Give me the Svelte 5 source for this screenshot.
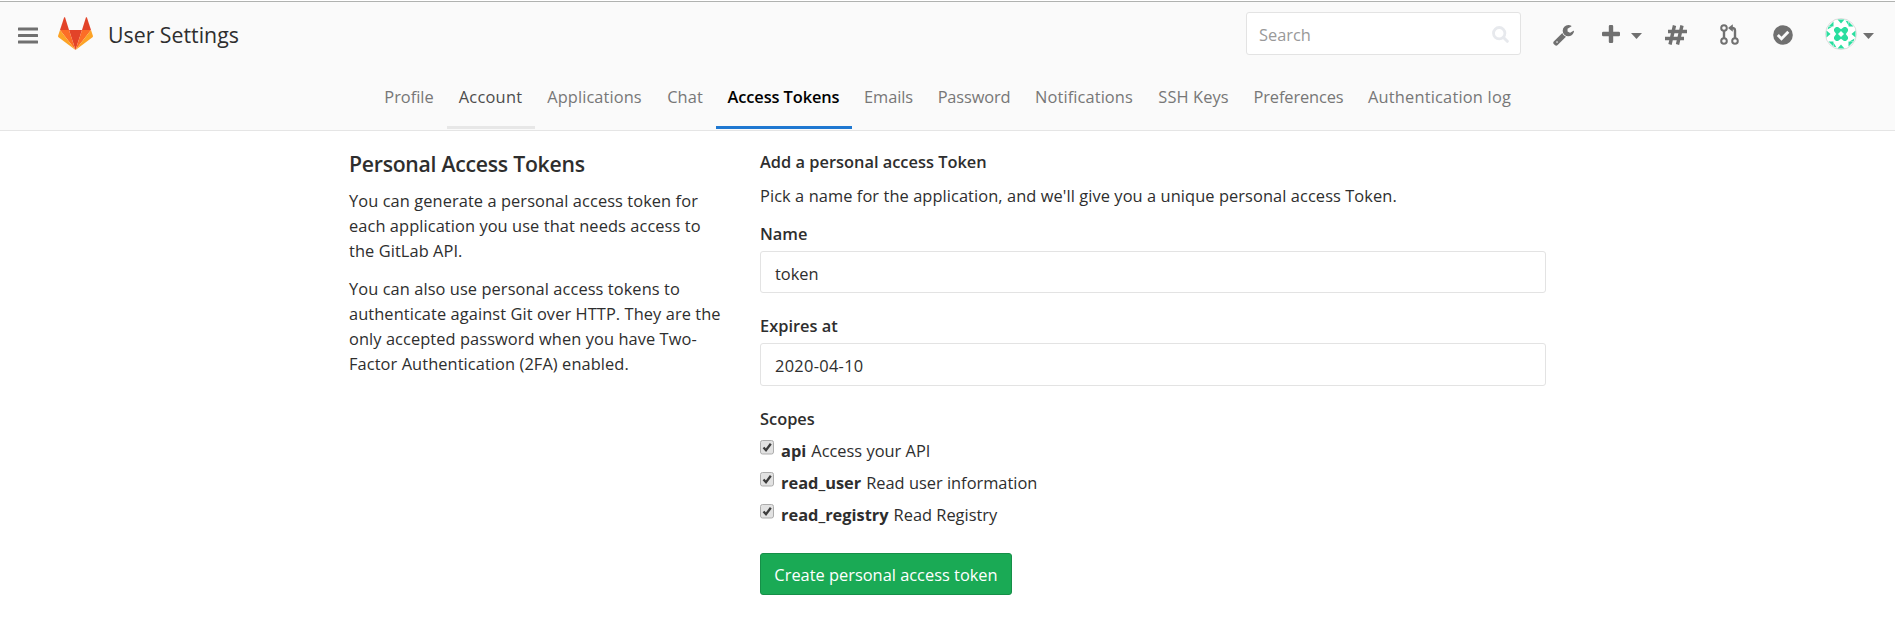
<script>
  const tabs = [
    { label: 'Profile', width: 75, spacing: 0 },
    { label: 'Account', width: 88, spacing: 0.25, state: 'hover' },
    { label: 'Applications', width: 120, spacing: 0.1 },
    { label: 'Chat', width: 61, spacing: 0.1 },
    { label: 'Access Tokens', width: 136, spacing: -0.1, state: 'active' },
    { label: 'Emails', width: 74, spacing: -0.1 },
    { label: 'Password', width: 97, spacing: -0.15 },
    { label: 'Notifications', width: 123, spacing: 0.1 },
    { label: 'SSH Keys', width: 96, spacing: 0.1 },
    { label: 'Preferences', width: 114, spacing: -0.12 },
    { label: 'Authentication log', width: 168, spacing: 0.2 }
  ];
  const scopes = [
    { name: 'api', text: 'Access your API' },
    { name: 'read_user', text: 'Read user information' },
    { name: 'read_registry', text: 'Read Registry' }
  ];
  const quarterTurns = [0, 90, 180, 270];
</script>

<header>
  <div class="bar">
    <svg class="burger" width="20" height="17" viewBox="0 0 20 17" fill="#707070">
      <rect y="0.5" width="20" height="3" rx=".5" /><rect y="7" width="20" height="3" rx=".5" /><rect y="13.5" width="20" height="3" rx=".5" />
    </svg>
    <svg class="logo" width="35" height="33" viewBox="0 0 35 33">
      <path fill="#e24329" d="M17.5 33 24 13H11z" />
      <path fill="#fc6d26" d="M17.5 33 11 13H2z" />
      <path fill="#fca326" d="M2 13 .1 18.8c-.2.6 0 1.200.4 1.500L17.500 33z" />
      <path fill="#e24329" d="M2 13h9L7.200.8c-.2-.6-1-.6-1.200 0z" />
      <path fill="#fc6d26" d="M17.500 33 24 13h9z" />
      <path fill="#fca326" d="m33 13 1.900 5.800c.2.6 0 1.200-.4 1.500L17.500 33z" />
      <path fill="#e24329" d="M33 13h-9L27.800.8c.2-.6 1-.6 1.200 0z" />
    </svg>
    <h1>User Settings</h1>
    <div class="search">
      <span>Search</span>
      <svg width="17" height="17" viewBox="0 0 17 17" fill="none" stroke="#e7e9ed">
        <circle cx="7.200" cy="7.200" r="5.700" stroke-width="2.800" /><path d="m11.500 11.500 3.800 3.800" stroke-width="3" stroke-linecap="round" />
      </svg>
    </div>
    <svg class="wrench" width="21" height="21" viewBox="0 0 1664 1664"><path fill="#707070" d="M384 1344q0-26-19-45t-45-19-45 19-19 45 19 45 45 19 45-19 19-45zm644-420-682 682q-37 37-90 37-52 0-91-37L59 1498q-38-36-38-90 0-53 38-91l681-681q39 98 114.500 173.500T1028 924zm634-435q0 39-23 106-47 134-164.500 217.500T1216 896q-185 0-316.500-131.500T768 448t131.500-316.500T1216 0q58 0 121.500 16.500T1445 63q16 11 16 28t-16 28l-293 169v224l193 107q5-3 79-48.500t135.500-81T1630 454q15 0 23.500 10t8.500 25z" /></svg>
    <svg class="plus" width="18" height="18" viewBox="0 0 18 18"><path fill="#707070" d="M8 0h2q1.200 0 1.200 1.200v5.600h5.600q1.200 0 1.200 1.200v2q0 1.200-1.200 1.200h-5.600v5.600q0 1.200-1.200 1.200H8q-1.200 0-1.200-1.200v-5.600H1.200Q0 11.200 0 10V8q0-1.200 1.200-1.200h5.600V1.200Q6.800 0 8 0z" /></svg>
    <svg class="caret" width="11" height="6" viewBox="0 0 11 6"><path fill="#707070" d="M0 0h11L5.500 6z" /></svg>
    <svg class="hash" width="22" height="20" viewBox="0 0 22 20" fill="none" stroke="#707070" stroke-width="3.400"><path d="M9.500.5 5 19.500M17 .5l-4.500 19M3 6.500h19M0 13.500h19" /></svg>
    <svg class="merge" width="19" height="21" viewBox="0 0 19 21" fill="none" stroke="#707070">
      <g stroke-width="2"><circle cx="4" cy="4" r="2.800" /><circle cx="4" cy="17" r="2.800" /><circle cx="15" cy="17" r="2.800" /></g>
      <path stroke-width="2.400" d="M4 7v7M15 14V6.500Q15 4 12 4h-1" /><path fill="#707070" stroke="none" d="M12.800.3v7.400L8 4z" />
    </svg>
    <svg class="check" width="20" height="20" viewBox="0 0 20 20"><circle cx="10" cy="10" r="9.800" fill="#707070" /><path d="m4.800 10 3.700 3.700 6.800-6.900" fill="none" stroke="#fafafa" stroke-width="2.900" /></svg>
    <svg class="avatar" width="32" height="32" viewBox="0 0 32 32">
      <circle cx="16" cy="16" r="15.500" fill="#fff" stroke="#dcdcdc" />
      <g fill="#2ade9f">
        {#each quarterTurns as angle}
          <g transform="rotate({angle} 16 16)">
            <path d="M11 9h2L16 11.200v1.800L13 16h-1.800L9 13v-2z" />
            <path d="M12.500 1.500 19.500 1.500 16 5.500z" />
            <path d="M8.500 3.500v5L4 8zM3.500 8.500 7.500 8.500 2.500 11.500z" />
          </g>
        {/each}
      </g>
    </svg>
    <svg class="caret last" width="11" height="6" viewBox="0 0 11 6"><path fill="#707070" d="M0 0h11L5.500 6z" /></svg>
  </div>
  <nav>
    {#each tabs as tab}
      <a class={tab.state} style:width="{tab.width}px" style:letter-spacing="{tab.spacing}px">{tab.label}</a>
    {/each}
  </nav>
</header>

<main>
  <aside>
    <h2>Personal Access Tokens</h2>
    <p>You can generate a personal access token for<br />each application you use that needs access to<br />the GitLab API.</p>
    <p>You can also use personal access tokens to<br />authenticate against Git over HTTP. They are the<br />only accepted password when you have Two-<br />Factor Authentication (2FA) enabled.</p>
  </aside>
  <section>
    <h3>Add a personal access Token</h3>
    <p class="intro">Pick a name for the application, and we'll give you a unique personal access Token.</p>
    <h3 class="label">Name</h3>
    <div class="input">token</div>
    <h3 class="label expires">Expires at</h3>
    <div class="input date">2020-04-10</div>
    <h3 class="label scopes">Scopes</h3>
    {#each scopes as scope}
      <div class="scope">
        <svg width="14" height="15" viewBox="0 0 14 15">
          <rect x=".5" y=".5" width="13" height="13.500" rx="2" fill="#e2e2e2" stroke="#adadad" />
          <path d="m3.500 7.500 2.500 2.700 4.800-6.400" fill="none" stroke="#3c3c3c" stroke-width="2.300" />
        </svg>
        <b>{scope.name}</b><span>{scope.text}</span>
      </div>
    {/each}
    <button>Create personal access token</button>
  </section>
</main>

<style>
  :global(body) {
    background: #fff;
    color: #2e2e2e;
    font: 400 16.4px/25px "Open Sans", sans-serif;
  }
  header {
    box-sizing: border-box;
    height: 131px;
    padding-top: 1px;
    background: #fafafa;
    border-bottom: 1px solid #e5e5e5;
    box-shadow: inset 0 1px #fff, inset 0 2px #b0b2b0;
  }
  .bar {
    display: flex;
    align-items: center;
    height: 69px;
  }
  svg { display: block; flex: none; }
  .burger { margin-left: 18px; }
  .logo { margin: -4px 0 0 20px; }
  h1 {
    margin: -2px auto 0 15px;
    font-size: 21.3px;
    font-weight: 400;
  }
  .search {
    box-sizing: border-box;
    display: flex;
    align-items: center;
    justify-content: space-between;
    width: 275px;
    height: 43px;
    margin-top: -4px;
    padding: 2px 11px 0 12px;
    border: 1px solid #e3e3e3;
    border-radius: 3px;
    background: #fff;
    color: #999;
  }
  .wrench { margin-left: 32px; }
  .plus { margin-left: 28px; margin-top: -3px; }
  .caret { margin: 1px 0 0 11px; }
  .hash { margin-left: 23px; margin-top: -2px; }
  .merge { margin-left: 33px; margin-top: -2px; }
  .check { margin-left: 34px; margin-top: -1px; }
  .avatar { margin: -4px 0 0 32px; }
  .caret.last { margin: 1px 21px 0 6px; }
  nav {
    display: flex;
    justify-content: center;
  }
  nav a {
    box-sizing: border-box;
    height: 59px;
    padding-top: 14px;
    border-bottom: 3px solid transparent;
    color: #777;
    text-align: center;
    white-space: nowrap;
  }
  nav a.hover { border-color: #e7e7e7; color: #4c4c4c; }
  nav a.active { border-color: #1f78d1; color: #000; font-weight: 600; }
  main {
    display: flex;
    width: 1197px;
    margin: 0 auto;
    white-space: nowrap;
  }
  aside { width: 411px; }
  section { width: 786px; }
  h2 {
    margin: 19px 0 11px;
    font-size: 21.2px;
    font-weight: 600;
    line-height: 27px;
    letter-spacing: -0.25px;
  }
  p { margin: 0 0 13px; letter-spacing: 0.08px; }
  h3 { margin: 0; font-size: 16.4px; font-weight: 600; }
  section > h3:first-child { margin-top: 18px; }
  .intro { margin: 9px 0 0; }
  .label { margin-top: 13px; }
  .label.expires { margin-top: 20px; }
  .label.scopes { margin-top: 20px; }
  .input {
    box-sizing: border-box;
    height: 42px;
    margin-top: 5px;
    padding: 9px 14px 0;
    border: 1px solid #e3e3e3;
    border-radius: 3px;
  }
  .input.date { height: 43px; letter-spacing: 0.3px; }
  .scope { display: flex; height: 25px; margin-top: 7px; }
  .scope svg { margin: 2px 7px 0 0; }
  b { margin-right: 5px; }
  button {
    display: block;
    width: 252px;
    height: 42px;
    margin-top: 26px;
    padding: 0;
    border: 1px solid #168f48;
    border-radius: 3px;
    background: #1aaa55;
    color: #fff;
    font: inherit;
  }
</style>
